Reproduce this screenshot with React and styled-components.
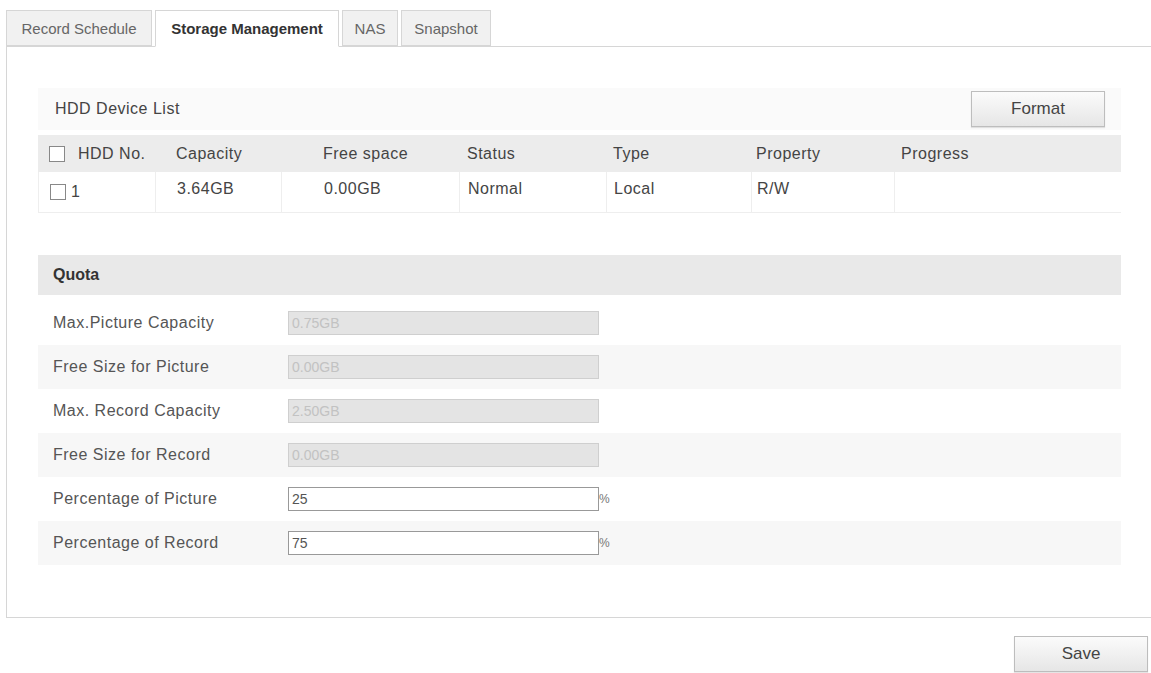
import React from "react";
import styled, { createGlobalStyle } from "styled-components";

const Global = createGlobalStyle`
  html, body { margin: 0; padding: 0; background: #fff; }
  body { font-family: "Liberation Sans", Arial, sans-serif; font-size: 16px; letter-spacing: 0.5px; color: #444; }
`;

const Page = styled.div`
  width: 1151px; height: 673px; padding: 10px 0 0 6px; box-sizing: border-box;
  display: flex; flex-direction: column;
`;
const Tabs = styled.div`display: flex; gap: 3px; height: 37px; position: relative; z-index: 1;`;
const Tab = styled.div`
  width: ${p => p.$w}px; justify-content: center; display: flex; align-items: center;
  border: 1px solid #d6d6d6; border-bottom: ${p => (p.$active ? "1px solid #fff" : "1px solid #d6d6d6")};
  background: ${p => (p.$active ? "#fff" : "#f1f1f1")};
  font-weight: ${p => (p.$active ? "bold" : "normal")};
  color: ${p => (p.$active ? "#333" : "#666")};
  height: ${p => (p.$active ? 37 : 36)}px; box-sizing: border-box; font-size: 15px; letter-spacing: 0;
`;
const Panel = styled.div`
  margin-top: -1px; width: 1145px; height: 572px; box-sizing: border-box;
  border: 1px solid #d6d6d6; border-right: none; padding: 41px 0 0 31px;
`;
const Section = styled.div`width: 1083px;`;
const ListHead = styled.div`
  height: 42px; display: flex; align-items: center; justify-content: space-between;
  padding: 0 16px 0 17px; background: #fafafa;
`;
const Button = styled.button`
  font-family: inherit; font-size: 17px; color: #444;
  width: ${p => p.$w}px; height: 36px; border: 1px solid #bdbdbd;
  background: linear-gradient(#fbfbfb, #e6e6e6); box-shadow: 0 1px 1px rgba(0,0,0,0.1);
`;
const Grid = styled.div`
  display: grid; grid-template-columns: 117px 126px 178px 147px 145px 143px 1fr;
  margin-top: 5px;
`;
const Cell = styled.div`
  height: ${p => (p.$head ? 37 : 41)}px; display: flex; align-items: center;
  padding-left: ${p => p.$pl ?? 21}px; box-sizing: border-box; white-space: nowrap;
  background: ${p => (p.$head ? "#ececec" : "#fff")};
  border-left: ${p => (p.$head ? "none" : "1px solid #eee")};
  border-bottom: ${p => (p.$head ? "none" : "1px solid #eee")};
  ${p => (p.$up ? "padding-bottom:6px;" : "")}
`;
const Check = styled.span`
  width: 14px; height: 14px; border: 1px solid #888; background: #fff; display: inline-block;
  margin-right: ${p => p.$mr}px; flex: none;
`;
const QuotaHead = styled.div`
  margin-top: 42px; height: 40px; background: #e9e9e9; display: flex; align-items: center;
  padding-left: 15px; font-weight: bold; color: #333; letter-spacing: 0;
`;
const Rows = styled.div`margin-top: 6px;`;
const Row = styled.div`
  height: 44px; display: flex; align-items: center; padding-left: 15px;
  background: ${p => (p.$alt ? "#f7f7f7" : "#fff")};
`;
const Label = styled.div`width: 235px; color: #555;`;
const Field = styled.div`
  width: 311px; height: 24px; box-sizing: border-box; padding-left: 3px;
  display: flex; align-items: center; font-size: 14px; letter-spacing: 0;
  border: 1px solid ${p => (p.$disabled ? "#cfcfcf" : "#999")};
  background: ${p => (p.$disabled ? "#e4e4e4" : "#fff")};
  color: ${p => (p.$disabled ? "#c2c2c2" : "#555")};
`;
const Unit = styled.span`font-size: 12px; color: #777;`;
const Footer = styled.div`display: flex; justify-content: flex-end; padding: 18px 3px 0 0;`;

const heads = ["HDD No.", "Capacity", "Free space", "Status", "Type", "Property", "Progress"];
const vals = ["3.64GB", "0.00GB", "Normal", "Local", "R/W", ""];
const pl = [5, 21, 42, 8, 7, 5, 7];
const rows = [
  ["Max.Picture Capacity", "0.75GB", true],
  ["Free Size for Picture", "0.00GB", true],
  ["Max. Record Capacity", "2.50GB", true],
  ["Free Size for Record", "0.00GB", true],
  ["Percentage of Picture", "25", false],
  ["Percentage of Record", "75", false],
];

export default function App() {
  return (
    <Page>
      <Global />
      <Tabs>
        <Tab $w={146}>Record Schedule</Tab>
        <Tab $active $w={184}>Storage Management</Tab>
        <Tab $w={56}>NAS</Tab>
        <Tab $w={90}>Snapshot</Tab>
      </Tabs>
      <Panel>
        <Section>
          <ListHead>
            <span>HDD Device List</span>
            <Button $w={134}>Format</Button>
          </ListHead>
          <Grid>
            {heads.map((h, i) => (
              <Cell key={h} $head $pl={i === 0 ? 11 : pl[i]}>
                {i === 0 && <Check $mr={13} />}
                {h}
              </Cell>
            ))}
            <Cell $pl={11}><Check $mr={5} />1</Cell>
            {vals.map((v, i) => (
              <Cell key={i} $pl={pl[i + 1]} $up>{v}</Cell>
            ))}
          </Grid>
          <QuotaHead>Quota</QuotaHead>
          <Rows>
            {rows.map(([l, v, d], i) => (
              <Row key={l} $alt={i % 2 === 1}>
                <Label>{l}</Label>
                <Field $disabled={d}>{v}</Field>
                {!d && <Unit>%</Unit>}
              </Row>
            ))}
          </Rows>
        </Section>
      </Panel>
      <Footer>
        <Button $w={134}>Save</Button>
      </Footer>
    </Page>
  );
}
